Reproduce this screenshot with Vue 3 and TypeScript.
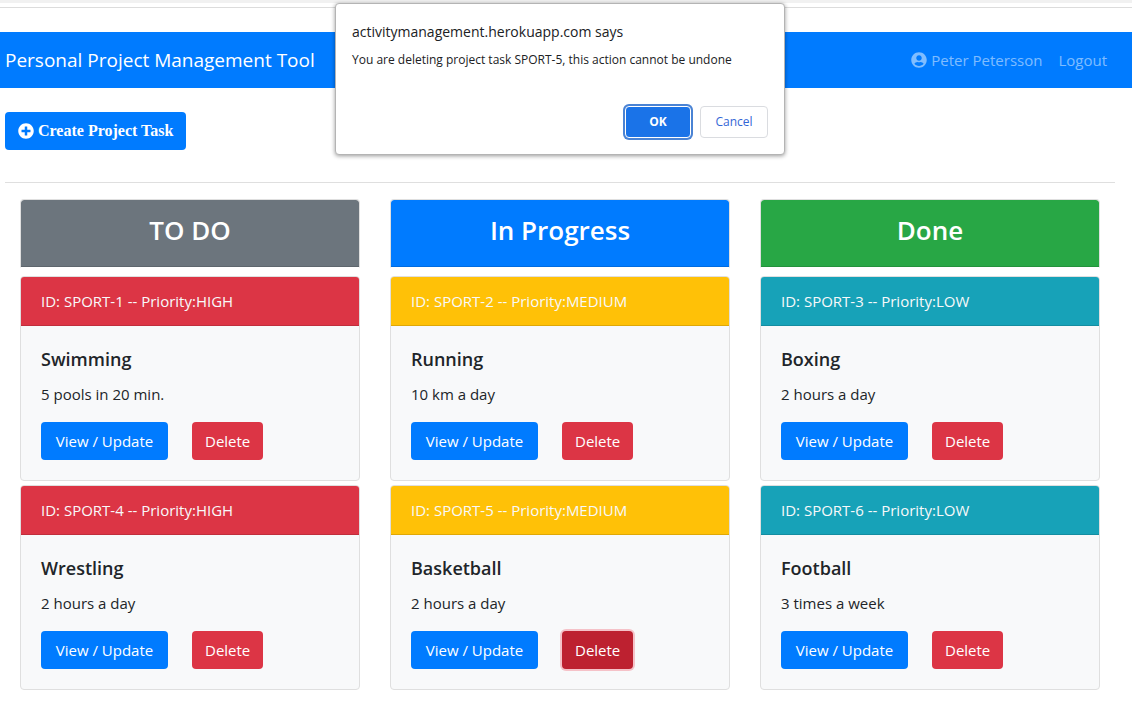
<script setup lang="ts">
import { ref } from 'vue'

type Priority = 'HIGH' | 'MEDIUM' | 'LOW'

interface Task {
  id: string
  priority: Priority
  title: string
  summary: string
}

interface Column {
  title: string
  tone: string
  tasks: Task[]
}

const columns: Column[] = [
  {
    title: 'TO DO',
    tone: 'secondary',
    tasks: [
      { id: 'SPORT-1', priority: 'HIGH', title: 'Swimming', summary: '5 pools in 20 min.' },
      { id: 'SPORT-4', priority: 'HIGH', title: 'Wrestling', summary: '2 hours a day' },
    ],
  },
  {
    title: 'In Progress',
    tone: 'primary',
    tasks: [
      { id: 'SPORT-2', priority: 'MEDIUM', title: 'Running', summary: '10 km a day' },
      { id: 'SPORT-5', priority: 'MEDIUM', title: 'Basketball', summary: '2 hours a day' },
    ],
  },
  {
    title: 'Done',
    tone: 'success',
    tasks: [
      { id: 'SPORT-3', priority: 'LOW', title: 'Boxing', summary: '2 hours a day' },
      { id: 'SPORT-6', priority: 'LOW', title: 'Football', summary: '3 times a week' },
    ],
  },
]

const tones: Record<Priority, string> = { HIGH: 'danger', MEDIUM: 'warning', LOW: 'info' }

const pendingId = ref<string | null>('SPORT-5')

function close(): void {
  pendingId.value = null
}
</script>

<template>
  <div class="page">
    <div class="window-edge"></div>

    <nav class="navbar">
      <a class="brand" href="#">Personal Project Management Tool</a>
      <div class="nav-links">
        <a class="nav-link" href="#">
          <svg class="icon" viewBox="0 0 496 512" aria-hidden="true">
            <path
              d="M248 8C111 8 0 119 0 256s111 248 248 248 248-111 248-248S385 8 248 8zm0 96c48.600 0 88 39.400 88 88s-39.400 88-88 88-88-39.400-88-88 39.400-88 88-88zm0 344c-58.700 0-111.300-26.600-146.500-68.200 18.800-35.400 55.600-59.800 98.500-59.800 2.400 0 4.800.4 7.100 1.100 13 4.200 26.600 6.900 40.900 6.900 14.300 0 28-2.700 40.900-6.900 2.300-.7 4.700-1.100 7.100-1.100 42.900 0 79.700 24.400 98.500 59.800C359.300 421.400 306.700 448 248 448z"
            />
          </svg>
          <span>Peter Petersson</span>
        </a>
        <a class="nav-link" href="#">Logout</a>
      </div>
    </nav>

    <main class="container">
      <a class="btn primary create" href="#">
        <svg class="icon" viewBox="0 0 512 512" aria-hidden="true">
          <path
            d="M256 8C119 8 8 119 8 256s111 248 248 248 248-111 248-248S393 8 256 8zm144 276c0 6.600-5.400 12-12 12h-92v92c0 6.600-5.400 12-12 12h-56c-6.600 0-12-5.400-12-12v-92h-92c-6.600 0-12-5.400-12-12v-56c0-6.600 5.400-12 12-12h92v-92c0-6.600 5.400-12 12-12h56c6.600 0 12 5.400 12 12v92h92c6.600 0 12 5.400 12 12v56z"
          />
        </svg>
        <span>Create Project Task</span>
      </a>

      <hr class="rule" />

      <div class="board">
        <section v-for="column in columns" :key="column.title" class="column">
          <header class="column-head" :class="column.tone">
            <h3>{{ column.title }}</h3>
          </header>
          <article v-for="task in column.tasks" :key="task.id" class="card">
            <div class="card-head" :class="tones[task.priority]">
              ID: {{ task.id }} -- Priority:{{ task.priority }}
            </div>
            <div class="card-body">
              <h5>{{ task.title }}</h5>
              <p>{{ task.summary }}</p>
              <div class="actions">
                <a class="btn primary view" href="#">View / Update</a>
                <button
                  type="button"
                  class="btn danger"
                  :class="{ pressed: pendingId === task.id }"
                  @click="pendingId = task.id"
                >
                  Delete
                </button>
              </div>
            </div>
          </article>
        </section>
      </div>
    </main>

    <div v-if="pendingId" class="overlay">
      <div class="dialog" role="alertdialog" aria-labelledby="dialog-title" aria-describedby="dialog-text">
        <h2 id="dialog-title">activitymanagement.herokuapp.com says</h2>
        <p id="dialog-text">
          You are deleting project task {{ pendingId }}, this action cannot be undone
        </p>
        <div class="dialog-actions">
          <button type="button" class="ok" @click="close">OK</button>
          <button type="button" class="cancel" @click="close">Cancel</button>
        </div>
      </div>
    </div>
  </div>
</template>

<style>
body {
  background: #fff;
}
</style>

<style scoped>
.page,
.page * {
  box-sizing: border-box;
}

.page {
  position: relative;
  font-family: 'Segoe UI', 'Open Sans', 'Noto Sans', sans-serif;
  font-size: 15px;
  line-height: 24px;
  color: #212529;
}

h2,
h3,
h5,
p {
  margin: 0;
}

a {
  text-decoration: none;
}

.window-edge {
  height: 8px;
  margin-bottom: 24px;
  border-top: 3px solid #f1f1f1;
  border-bottom: 1px solid #dcdcdc;
}

.navbar {
  display: flex;
  align-items: center;
  justify-content: space-between;
  height: 56px;
  padding: 0 17px 0 5px;
  background: #007bff;
}

.brand {
  font-size: 19px;
  line-height: 30px;
  color: #fff;
}

.nav-links {
  display: flex;
}

.nav-link {
  display: flex;
  align-items: center;
  gap: 4px;
  padding: 8px;
  color: rgba(255, 255, 255, 0.5);
}

.icon {
  width: 16px;
  height: 16px;
  fill: currentColor;
}

.container {
  padding: 24px 17px 24px 5px;
}

.btn {
  display: inline-flex;
  align-items: center;
  justify-content: center;
  gap: 4px;
  height: 38px;
  padding: 0 12px;
  border: 1px solid transparent;
  border-radius: 4px;
  font: inherit;
  color: #fff;
  cursor: pointer;
}

.create {
  display: flex;
  width: fit-content;
  font-family: 'Liberation Serif', serif;
  font-size: 16px;
  font-weight: 700;
}

.view {
  min-width: 127px;
}

.rule {
  height: 1px;
  margin: 32px 0 16px;
  border: 0;
  background: #dfdfdf;
}

.board {
  display: grid;
  grid-template-columns: repeat(3, 1fr);
  gap: 30px;
  padding: 0 15px;
}

.column {
  display: flex;
  flex-direction: column;
  gap: 4px;
}

.column-head {
  margin-bottom: 4px;
  padding: 13px 20px 20px;
  border: 1px solid #dfdfdf;
  border-bottom-color: #fff;
  border-radius: 4px 4px 1px 1px;
  background-clip: padding-box;
  box-shadow: inset 0 -1px 0 rgba(0, 0, 0, 0.125);
  text-align: center;
  color: #fff;
}

.column-head h3 {
  font-size: 26px;
  font-weight: 600;
  line-height: 34px;
}

.card {
  border: 1px solid #dfdfdf;
  border-radius: 4px;
  background: #f8f9fa;
}

.card-head {
  padding: 12px 20px;
  border-bottom: 1px solid rgba(0, 0, 0, 0.125);
  border-radius: 3px 3px 0 0;
  color: #f8f9fa;
}

.card-body {
  padding: 20px;
}

.card-body h5 {
  margin-bottom: 10px;
  font-size: 18px;
  font-weight: 600;
  line-height: 26px;
}

.card-body p {
  margin-bottom: 16px;
}

.actions {
  display: flex;
  gap: 24px;
}

.primary {
  background-color: #007bff;
}

.secondary {
  background-color: #6c757d;
}

.success {
  background-color: #28a745;
}

.danger {
  background-color: #dc3545;
}

.warning {
  background-color: #ffc107;
}

.info {
  background-color: #17a2b8;
}

.pressed {
  background-color: #bd2130;
  box-shadow: 0 0 0 2px #f5c2c8;
}

.overlay {
  position: absolute;
  top: 3px;
  left: 5px;
  right: 17px;
  display: flex;
  justify-content: center;
}

.dialog {
  width: 450px;
  padding: 16px;
  border: 1px solid #b4b4b4;
  border-radius: 4px;
  background: #fff;
  box-shadow: 0 1px 4px rgba(0, 0, 0, 0.4);
  color: #202124;
}

.dialog h2 {
  margin-bottom: 6px;
  font-size: 14px;
  font-weight: 400;
  line-height: 24px;
}

.dialog p {
  margin-bottom: 36px;
  font-size: 12px;
  line-height: 20px;
}

.dialog-actions {
  display: flex;
  justify-content: flex-end;
  gap: 9px;
}

.dialog-actions button {
  height: 32px;
  border: 1px solid #dadce0;
  border-radius: 4px;
  background: #fff;
  font: 500 12px/16px 'Segoe UI', 'Open Sans', 'Noto Sans', sans-serif;
  color: #3367d6;
  cursor: pointer;
}

.dialog-actions .ok {
  width: 66px;
  border-color: #fff;
  background: #1a73e8;
  box-shadow: 0 0 0 2px #4a83d4;
  font-weight: 700;
  color: #fff;
}

.dialog-actions .cancel {
  width: 68px;
}
</style>
